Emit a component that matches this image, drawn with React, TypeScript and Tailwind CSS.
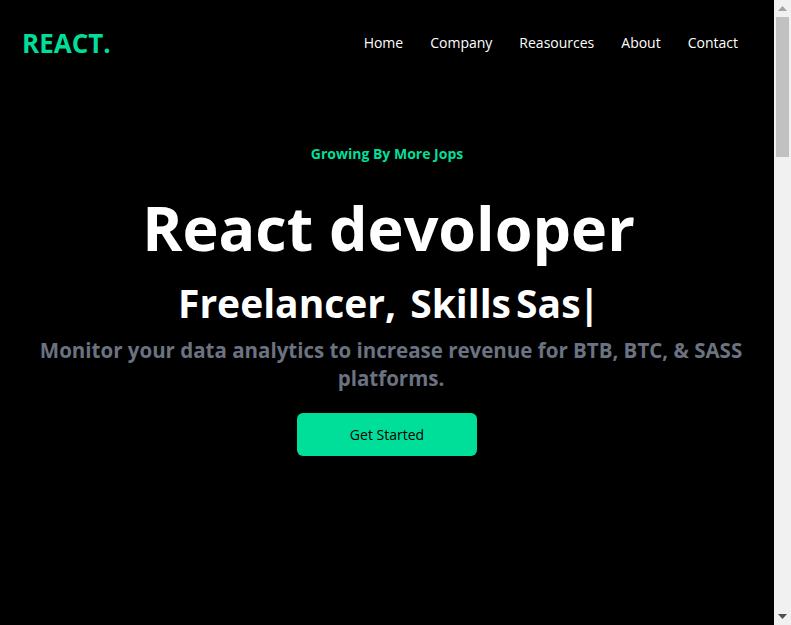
import React from 'react';

const links = ['Home', 'Company', 'Reasources', 'About', 'Contact'];

function Navbar() {
  return (
    <nav className="flex justify-between items-center h-[86px] max-w-[1240px] mx-auto pl-[22px] pr-[36px] text-white">
      <h1 className="text-[26px] leading-[26px] font-bold text-[#00df9a]">REACT.</h1>
      <ul className="flex items-center gap-[27px]">
        {links.map((link) => (
          <li key={link} className="text-[14px] leading-5 cursor-pointer">
            {link}
          </li>
        ))}
      </ul>
    </nav>
  );
}

function Hero() {
  return (
    <div className="text-white">
      <div className="max-w-[800px] w-full mx-auto text-center flex flex-col pt-[58px]">
        <p className="text-[#00df9a] text-[14px] leading-5 font-bold">Growing By More Jops</p>
        <h1 className="text-[61px] leading-[62px] font-bold mt-[33px] pl-[3px]">React devoloper</h1>
        <div className="flex justify-center items-center mt-[24px] pl-[4px]">
          <p className="text-[39px] leading-[40px] font-bold">Freelancer,</p>
          {/* typed text + cursor */}
          <p className="text-[39px] leading-[40px] font-bold pl-[14px] [word-spacing:-5px]">
            Skills Sas<span className="font-bold ml-[-2px]">|</span>
          </p>
        </div>
        <p className="text-[20.5px] leading-7 font-bold text-[#6b7280] mt-[13px] pl-[8px]">
          Monitor your data analytics to increase revenue for BTB, BTC, &amp; SASS platforms.
        </p>
        <button className="bg-[#00df9a] w-[180px] h-[43px] rounded-md font-medium text-[14px] mt-[21px] mx-auto text-black">
          Get Started
        </button>
      </div>
    </div>
  );
}

// browser-style scrollbar strip (the page is scrolled to the top)
function ScrollStrip() {
  return (
    <div className="sticky top-0 w-[17px] h-[625px] shrink-0 bg-[#f1f1f1] flex flex-col items-center">
      <div className="h-[17px] w-full flex items-center justify-center">
        <svg width="9" height="5" viewBox="0 0 9 5">
          <polygon points="4.5,0 9,5 0,5" fill="#a3a3a3" />
        </svg>
      </div>
      <div className="w-[13px] h-[140px] bg-[#c1c1c1]" />
      <div className="flex-1" />
      <div className="h-[17px] w-full flex items-center justify-center">
        <svg width="9" height="5" viewBox="0 0 9 5">
          <polygon points="0,0 9,0 4.5,5" fill="#505050" />
        </svg>
      </div>
    </div>
  );
}

export default function App() {
  return (
    <div className="flex items-start bg-black font-['Open_Sans',sans-serif]">
      <div className="flex-1 min-w-0 min-h-[2620px] bg-black">
        <Navbar />
        <Hero />
      </div>
      <ScrollStrip />
    </div>
  );
}
